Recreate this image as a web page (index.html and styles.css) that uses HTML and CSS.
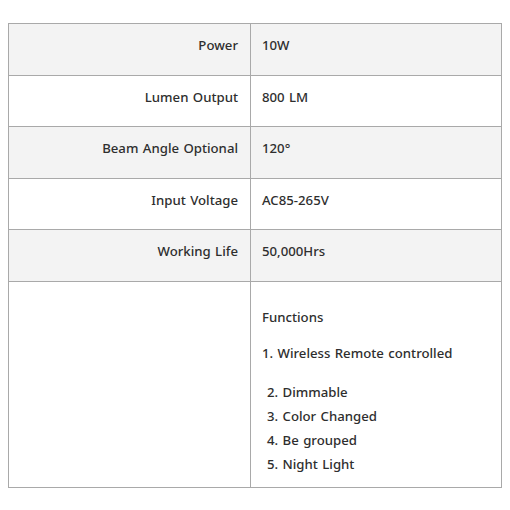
FILE: index.html
```html
<!DOCTYPE html>
<html>
<head>
<meta charset="utf-8">
<link rel="stylesheet" href="styles.css">
</head>
<body>
<table class="spec">
  <tr class="alt"><td class="label">Power</td><td class="value">10W</td></tr>
  <tr><td class="label">Lumen Output</td><td class="value">800 LM</td></tr>
  <tr class="alt"><td class="label">Beam Angle Optional</td><td class="value">120°</td></tr>
  <tr><td class="label">Input Voltage</td><td class="value">AC85-265V</td></tr>
  <tr class="alt"><td class="label">Working Life</td><td class="value">50,000Hrs</td></tr>
  <tr class="last">
    <td class="label"></td>
    <td class="value funcs">
      <p class="func-title">Functions</p>
      <p class="func-first">1. Wireless Remote controlled</p>
      <ul class="func-list">
        <li>2. Dimmable</li>
        <li>3. Color Changed</li>
        <li>4. Be grouped</li>
        <li>5. Night Light</li>
      </ul>
    </td>
  </tr>
</table>
</body>
</html>
```

FILE: styles.css
```css
html, body {
  margin: 0;
  padding: 0;
  background: #ffffff;
}
body {
  padding: 23px 8px 0 8px;
  font-family: "Noto Sans", "DejaVu Sans", sans-serif;
  font-size: 13.2px;
  word-spacing: 1px;
  color: #2e2e2e;
}
.spec {
  width: 494px;
  border-collapse: collapse;
  table-layout: fixed;
}
.spec td {
  border: 1px solid #a9a9a9;
  vertical-align: top;
  padding: 11px 12px 0 11px;
  height: 39.6px;
  line-height: 20px;
  font-weight: 500;
}
.spec tr.alt td {
  background: #f3f3f3;
}
.spec td.label {
  width: 218px;
  text-align: right;
}
.spec td.funcs {
  padding-top: 25px;
  height: 180px;
}
.funcs p {
  margin: 0;
}
.funcs .func-title {
  margin-bottom: 16px;
}
.func-list {
  list-style: none;
  margin: 17px 0 0 0;
  padding: 0 0 0 5px;
}
.func-list li {
  line-height: 24px;
}
```
